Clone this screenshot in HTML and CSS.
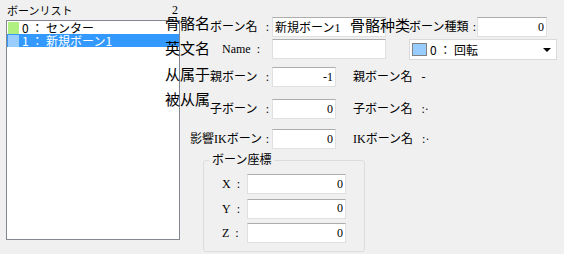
FILE: index.html
```html
<!DOCTYPE html>
<html>
<head>
<meta charset="utf-8">
<title>ボーン編集</title>
<link rel="stylesheet" href="styles.css">
</head>
<body>
<div class="window">
  <div class="bones">
    <div class="bones-head"><span>ボーンリスト</span><span class="count">2</span></div>
    <ul class="bone-list">
      <li><span class="swatch green"></span>0 ： センター</li>
      <li class="selected"><span class="swatch blue"></span>1 ： 新規ボーン1</li>
    </ul>
  </div>
  <div class="props">
    <div class="row r1">
      <span class="note">骨骼名</span>
      <label class="lbl"><span>ボーン名</span><i>:</i></label>
      <input class="field long" value="新規ボーン1">
      <span class="note over">骨骼种类</span>
      <label class="lbl kind"><span>ボーン種類</span><i>:</i></label>
      <input class="field num type" value="0">
    </div>
    <div class="row r2">
      <span class="note">英文名</span>
      <label class="lbl name"><span>Name</span><i>:</i></label>
      <input class="field long" value="">
      <div class="combo"><span class="swatch blue"></span>0 ： 回転<span class="caret"></span></div>
    </div>
    <div class="row r3">
      <span class="note">从属于</span>
      <label class="lbl"><span>親ボーン</span><i>:</i></label>
      <input class="field num short" value="-1">
      <span class="ref">親ボーン名<i>-</i></span>
    </div>
    <div class="row r4">
      <span class="note">被从属</span>
      <label class="lbl"><span>子ボーン</span><i>:</i></label>
      <input class="field num short" value="0">
      <span class="ref">子ボーン名<i>:·</i></span>
    </div>
    <div class="row r5">
      <label class="lbl ik"><span>影響IKボーン</span><i>:</i></label>
      <input class="field num short" value="0">
      <span class="ref">IKボーン名<i>:·</i></span>
    </div>
    <fieldset class="coords">
      <legend>ボーン座標</legend>
      <div class="axis"><label>X<i>:</i></label><input class="field num coord" value="0"></div>
      <div class="axis"><label>Y<i>:</i></label><input class="field num coord" value="0"></div>
      <div class="axis"><label>Z<i>:</i></label><input class="field num coord" value="0"></div>
    </fieldset>
  </div>
</div>
</body>
</html>
```

FILE: styles.css
```css
* {
	box-sizing: border-box;
}
html, body {
	margin: 0;
}
body {
	width: 564px;
	height: 254px;
	overflow: hidden;
	background: #f0f0f0;
	color: #000;
	font: 12px "Liberation Serif", "Noto Sans CJK JP", serif;
}
.window {
	display: flex;
	padding-left: 6px;
}

/* bone list */
.bones {
	flex: none;
	width: 174px;
	padding-top: 3px;
}
.bones-head {
	display: flex;
	justify-content: space-between;
	height: 17px;
	padding: 0 2px 0 1px;
	font: 11px/14px "Noto Sans CJK JP", sans-serif;
}
.bones-head .count {
	font: 12px/14px "Liberation Serif", serif;
}
.bone-list {
	list-style: none;
	margin: 0;
	padding: 0;
	height: 220px;
	border: 1px solid #828790;
	background: #fff;
}
.bone-list li {
	display: flex;
	align-items: center;
	height: 13px;
	padding-left: 1px;
	font: 12px/13px "Noto Sans CJK JP", sans-serif;
	white-space: nowrap;
}
.bone-list li.selected {
	background: #3399ff;
	color: #fff;
}
.swatch {
	flex: none;
	width: 11px;
	height: 12px;
	margin-right: 3px;
}
.green {
	background: #b0f080;
}
.blue {
	background: #99ccff;
}

/* property form */
.props {
	margin-left: -15px;
	padding-top: 17px;
}
.row {
	display: flex;
	align-items: flex-start;
	height: 20px;
}
.r2 { margin-top: 2px; }
.r3 { margin-top: 8px; }
.r4 { margin-top: 12px; }
.r5 { margin-top: 10px; }

.note {
	flex: none;
	width: 45px;
	font: 15px/18px "Noto Sans CJK SC", sans-serif;
	white-space: nowrap;
}
.r1 .note { margin-top: -3px; }
.r3 .note { margin-top: -2px; }
.r4 .note { margin-top: -9px; }
.note.over {
	width: 59px;
	margin: -1px 0 0 -36px;
}

.lbl {
	flex: none;
	display: flex;
	justify-content: space-between;
	width: 62px;
	height: 20px;
	line-height: 20px;
	padding-right: 3px;
	white-space: nowrap;
}
.lbl i, .ref i, .axis i {
	font-style: normal;
}
.lbl.name {
	width: 50px;
	margin-left: 12px;
	justify-content: flex-start;
	gap: 6px;
}
.lbl.kind {
	width: 68px;
	padding-right: 1px;
}
.lbl.ik {
	width: 82px;
	margin-left: 25px;
}

.field {
	flex: none;
	height: 20px;
	padding: 0 2px;
	border: 1px solid #e0e0e0;
	border-top-color: #adadad;
	background: #fff;
	color: #000;
	font: 12px "Liberation Serif", "Noto Sans CJK JP", serif;
	outline: none;
}
.field.long { width: 114px; }
.field.short { width: 64px; }
.field.type { width: 70px; }
.field.coord { width: 99px; }
.num {
	text-align: right;
}

.combo {
	flex: none;
	display: flex;
	align-items: center;
	width: 148px;
	height: 21px;
	margin-left: 23px;
	padding: 0 5px 0 2px;
	border: 1px solid #dadada;
	background: #fff;
	font: 12px/13px "Noto Sans CJK JP", sans-serif;
	white-space: nowrap;
}
.combo .swatch {
	width: 15px;
	height: 13px;
	border: 1px solid #808080;
}
.caret {
	width: 0;
	margin-left: auto;
	border-left: 4px solid transparent;
	border-right: 4px solid transparent;
	border-top: 4px solid #000;
}

.ref {
	flex: none;
	margin-left: 17px;
	height: 20px;
	line-height: 20px;
	white-space: nowrap;
}
.ref i {
	margin-left: 9px;
}

/* coordinates group */
.coords {
	display: flex;
	flex-direction: column;
	gap: 4.5px;
	width: 162px;
	min-width: 0;
	margin: 3px 0 0 38px;
	padding: 6px 18px 8px;
	border: 1px solid #dcdcdc;
	border-radius: 3px;
}
.coords legend {
	margin-left: -13px;
	padding: 0 3px;
	line-height: 16px;
}
.axis {
	display: flex;
	height: 20px;
}
.axis label {
	width: 25px;
	line-height: 20px;
}
.axis label i {
	margin-left: 6px;
}
```
